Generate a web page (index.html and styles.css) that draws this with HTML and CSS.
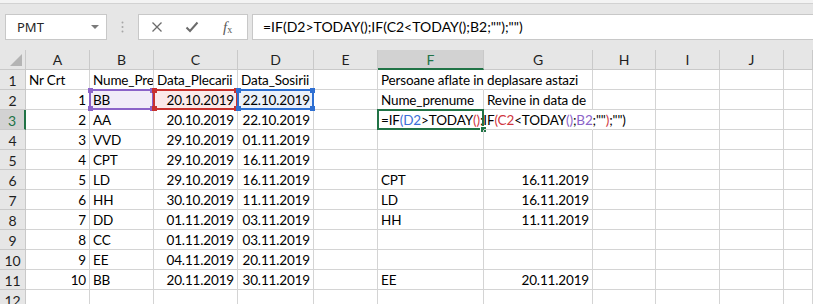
FILE: index.html
```
<!DOCTYPE html>
<html lang="ro">
<head>
    <meta charset="UTF-8">
    <meta name="viewport" content="width=device-width, initial-scale=1.0">
    <title>Deplasari</title>
    <link rel="stylesheet" href="styles.css">
</head>
<body>
    <div class="top-strip"></div>
    <div class="toolbar">
        <div class="name-box">
            <span>PMT</span>
            <span class="caret"></span>
        </div>
        <div class="grip">
            <svg width="3" height="12" viewBox="0 0 3 12"><circle cx="1.5" cy="1.5" r="1" fill="#a6a6a6"/><circle cx="1.5" cy="6" r="1" fill="#a6a6a6"/><circle cx="1.5" cy="10.5" r="1" fill="#a6a6a6"/></svg>
        </div>
        <div class="fx-buttons">
            <svg class="btn-icon" width="12" height="12" viewBox="0 0 12 12"><path d="M1.5 1.5 L10.5 10.5 M10.5 1.5 L1.5 10.5" stroke="#6b6b6b" stroke-width="1.3" fill="none"/></svg>
            <svg class="btn-icon" width="14" height="12" viewBox="0 0 14 12"><path d="M1.5 6.5 L5 10 L12.5 1.5" stroke="#6b6b6b" stroke-width="2" fill="none"/></svg>
            <span class="fx-label"><i>f</i><sub>x</sub></span>
        </div>
        <div class="formula-input">=IF(D2&gt;TODAY();IF(C2&lt;TODAY();B2;"");"")</div>
    </div>
    <div class="sheet" id="sheet"></div>

    <script>
        document.addEventListener('DOMContentLoaded', function () {
            const sheet = document.getElementById('sheet');
            // last column is only a sliver at the window edge, its letter is out of view
            const cols = ['A', 'B', 'C', 'D', 'E', 'F', 'G', 'H', 'I', 'J', ''];

            const formula = '=IF<span class="f-blue">(D2</span>&gt;TODAY<span class="f-red">()</span>;IF<span class="f-red">(C2</span>&lt;TODAY<span class="f-purple">()</span>;<span class="f-purple">B2</span>;""<span class="f-red">)</span>;"")';

            const rows = [
                ['Nr Crt', 'Nume_Prenume', 'Data_Plecarii', 'Data_Sosirii', '', 'Persoane aflate in deplasare astazi'],
                [1, 'BB', '20.10.2019', '22.10.2019', '', 'Nume_prenume', 'Revine in data de'],
                [2, 'AA', '20.10.2019', '22.10.2019', '', formula],
                [3, 'VVD', '29.10.2019', '01.11.2019'],
                [4, 'CPT', '29.10.2019', '16.11.2019'],
                [5, 'LD', '29.10.2019', '16.11.2019', '', 'CPT', '16.11.2019'],
                [6, 'HH', '30.10.2019', '11.11.2019', '', 'LD', '16.11.2019'],
                [7, 'DD', '01.11.2019', '03.11.2019', '', 'HH', '11.11.2019'],
                [8, 'CC', '01.11.2019', '03.11.2019'],
                [9, 'EE', '04.11.2019', '20.11.2019'],
                [10, 'BB', '20.11.2019', '30.11.2019', '', 'EE', '20.11.2019'],
                []
            ];

            // text that runs over into the empty cells next to it
            const spill = { F1: true, F3: true, G3: true };
            // coloured ranges from the formula being edited
            const ranges = { B2: 'purple', C2: 'red', D2: 'blue' };
            const active = 'F3';

            const corner = document.createElement('div');
            corner.className = 'head corner';
            corner.innerHTML = '<svg width="12" height="12" viewBox="0 0 12 12"><path d="M12 0 L12 12 L0 12 Z" fill="#b4b4b4"/></svg>';
            sheet.appendChild(corner);

            cols.forEach(col => {
                const head = document.createElement('div');
                head.className = 'head col-head' + (col === 'F' ? ' selected' : '');
                head.textContent = col;
                sheet.appendChild(head);
            });

            rows.forEach((values, r) => {
                const rowNum = r + 1;
                const head = document.createElement('div');
                head.className = 'head row-head' + (rowNum === 3 ? ' selected' : '');
                head.textContent = rowNum;
                sheet.appendChild(head);

                cols.forEach((col, c) => {
                    const ref = col + rowNum;
                    const value = values[c] === undefined ? '' : values[c];
                    const cell = document.createElement('div');
                    cell.className = 'cell';

                    if (/^\d/.test(String(value))) {
                        cell.classList.add('num');
                    }
                    if (spill[ref]) {
                        cell.classList.add('spill');
                    }

                    if (ref === active) {
                        cell.innerHTML = value;
                        const box = document.createElement('span');
                        box.className = 'active-box';
                        cell.appendChild(box);
                    } else {
                        cell.textContent = value;
                    }

                    if (ranges[ref]) {
                        cell.classList.add('range', 'range-' + ranges[ref]);
                        const box = document.createElement('span');
                        box.className = 'range-box';
                        ['tl', 'tr', 'bl', 'br'].forEach(pos => {
                            const dot = document.createElement('span');
                            dot.className = 'handle ' + pos;
                            box.appendChild(dot);
                        });
                        cell.appendChild(box);
                    }

                    sheet.appendChild(cell);
                });
            });
        });
    </script>
</body>
</html>
```

FILE: styles.css
```
body {
    margin: 0;
    background-color: #fff;
    font-family: Lato, "Open Sans", sans-serif;
    color: #000;
    overflow: hidden;
}

.top-strip {
    height: 3px;
    background-color: #f3f3f3;
    border-bottom: 1px solid #d2d2d2;
}

.toolbar {
    height: 46px;
    box-sizing: border-box;
    padding-top: 10px;
    background-color: #e6e6e6;
    display: flex;
    align-items: flex-start;
}

.name-box {
    margin-left: 5px;
    width: 102px;
    height: 26px;
    box-sizing: border-box;
    background-color: #fff;
    border: 1px solid #c8c8c8;
    display: flex;
    align-items: center;
    justify-content: space-between;
    padding: 0 7px 0 11px;
    font-family: "Noto Sans", sans-serif;
    font-size: 13px;
    color: #262626;
}

.caret {
    width: 0;
    height: 0;
    border-left: 4px solid transparent;
    border-right: 4px solid transparent;
    border-top: 4px solid #7a7a7a;
}

.grip {
    width: 31px;
    height: 26px;
    display: flex;
    align-items: center;
    justify-content: center;
}

.fx-buttons {
    width: 110px;
    height: 26px;
    box-sizing: border-box;
    background-color: #fff;
    border: 1px solid #c8c8c8;
    display: flex;
    align-items: center;
    padding-left: 12px;
    gap: 22px;
}

.fx-label {
    font-family: "Liberation Serif", serif;
    font-size: 15px;
    color: #5a5a5a;
    margin-left: 2px;
}

.fx-label sub {
    font-size: 10px;
    vertical-align: -1px;
}

.formula-input {
    flex: 1;
    margin-left: 4px;
    height: 26px;
    box-sizing: border-box;
    background-color: #fff;
    border: 1px solid #c8c8c8;
    border-right: none;
    padding-left: 10px;
    line-height: 24px;
    font-size: 14px;
    white-space: nowrap;
}

.sheet {
    display: grid;
    grid-template-columns: 26px 64px 64px 84px 76px 64px 106px 109px 63px 64px 64px 1fr;
    grid-auto-rows: 20px;
    font-size: 13.5px;
    letter-spacing: -0.15px;
}

.head {
    background-color: #e6e6e6;
    border-right: 1px solid #c9c9c9;
    border-bottom: 1px solid #c9c9c9;
    box-sizing: border-box;
    display: flex;
    align-items: center;
    justify-content: center;
    color: #1f1f1f;
    font-size: 14px;
    letter-spacing: 0;
}

.row-head {
    padding-top: 1px;
}

.corner {
    justify-content: flex-end;
    align-items: flex-end;
    padding: 0 3px 3px 0;
}

.head.selected {
    background-color: #d2d2d2;
    color: #217346;
}

.col-head.selected {
    border-bottom: 2px solid #217346;
}

.row-head.selected {
    border-right: 2px solid #217346;
}

.cell {
    position: relative;
    border-right: 1px solid #d4d4d4;
    border-bottom: 1px solid #d4d4d4;
    box-sizing: border-box;
    padding: 2px 3px 0;
    line-height: 17px;
    white-space: nowrap;
    overflow: hidden;
}

.cell.num {
    text-align: right;
}

.cell.spill {
    overflow: visible;
    border-right-color: transparent;
}

.range {
    overflow: visible;
}

.range-box {
    position: absolute;
    top: -1px;
    left: -1px;
    right: -1px;
    bottom: -1px;
    border: 2px solid;
    z-index: 1;
}

.range-purple { background-color: #f1ecf8; }
.range-purple .range-box { border-color: #8b63c8; }
.range-purple .handle { background-color: #8b63c8; }

.range-red { background-color: #fbeaea; }
.range-red .range-box { border-color: #c8312f; }
.range-red .handle { background-color: #c8312f; }

.range-blue { background-color: #eaf0fa; }
.range-blue .range-box { border-color: #2e6fd2; }
.range-blue .handle { background-color: #2e6fd2; }

.handle {
    position: absolute;
    width: 5px;
    height: 5px;
}

.handle.tl { top: -3px; left: -3px; z-index: 2; }
.handle.bl { bottom: -3px; left: -3px; z-index: 2; }
.handle.tr { top: -3px; right: -3px; z-index: 3; }
.handle.br { bottom: -3px; right: -3px; z-index: 3; }

.active-box {
    position: absolute;
    top: -1px;
    left: -1px;
    right: -1px;
    bottom: -1px;
    border: 2px solid #217346;
}

.active-box::after {
    content: "";
    position: absolute;
    right: -5px;
    bottom: -5px;
    width: 5px;
    height: 5px;
    background-color: #217346;
    border: 1px solid #fff;
}

.f-blue { color: #3b6fd6; }
.f-red { color: #d0373f; }
.f-purple { color: #8b63c8; }
```
